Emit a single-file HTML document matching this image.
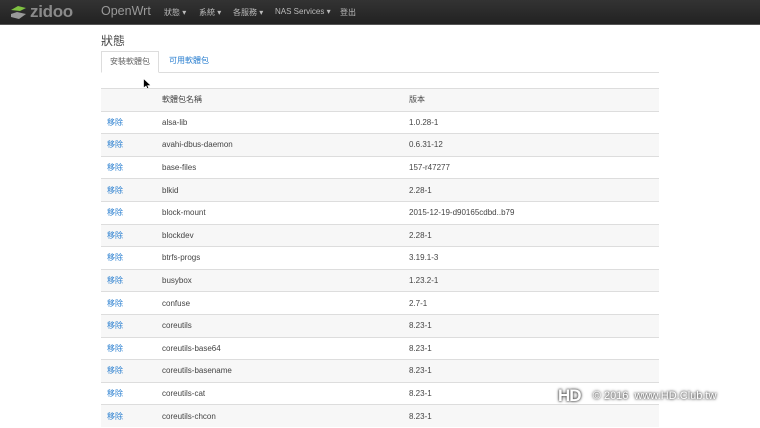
<!DOCTYPE html>
<html><head><meta charset="utf-8"><style>
*{margin:0;padding:0;box-sizing:border-box}
body{width:760px;height:428px;overflow:hidden;background:#fff;font-family:"Liberation Sans","Noto Sans CJK TC",sans-serif;color:#333;position:relative}
.nav{position:absolute;left:0;top:0;width:760px;height:25px;background:linear-gradient(#333,#222);border-bottom:1px solid #555}
.nav span{position:absolute;top:7px;font-size:8px;color:#bbb;white-space:nowrap}
.logo{position:absolute;left:30px;top:2px;font-size:17px;font-weight:bold;color:#8a8a8a;letter-spacing:-0.3px}
.ow{position:absolute;left:101px;top:4px;font-size:12.5px;color:#999}
.title{position:absolute;left:101px;top:32px;font-size:12px;color:#444}
.tabs{position:absolute;left:101px;top:72px;width:558px;border-top:1px solid #ddd}
.tab1{position:absolute;left:101px;top:51px;width:58px;height:22px;border:1px solid #ddd;border-bottom:1px solid #fff;background:#fff;font-size:8px;color:#666;text-align:center;line-height:20px}
.tab2{position:absolute;left:169px;top:51px;font-size:8px;color:#2a7fd0;line-height:20px}
table{position:absolute;left:101px;top:88px;width:558px;border-collapse:collapse;font-size:8px}
td{height:22.6px;border-top:1px solid #ddd;padding:0;vertical-align:middle;color:#444}
tr:nth-child(odd) td{background:#f7f7f7}
td.a{width:61px;padding-left:6px;color:#2a7fd0}
td.b{width:247px}
.wm{position:absolute;left:558px;top:386px;font-size:11px;color:#fff;text-shadow:0 0 3px #555,0 0 2px #333;white-space:nowrap}
</style></head><body>
<div class="nav">
<svg style="position:absolute;left:9px;top:5px" width="19" height="15" viewBox="0 0 19 15"><path d="M2 5 L9 1 L17 3 L11 6 Z" fill="#7fc241"/><path d="M2 9 L8 7 L17 9 L10 14 L2 12 Z" fill="#999"/></svg>
<div class="logo">zidoo</div>
<div class="ow">OpenWrt</div>
<span style="left:164px">狀態 ▾</span>
<span style="left:199px">系統 ▾</span>
<span style="left:233px">各服務 ▾</span>
<span style="left:275px">NAS Services ▾</span>
<span style="left:340px">登出</span>
</div>
<div class="title">狀態</div>
<div class="tabs"></div>
<div class="tab1">安裝軟體包</div>
<div class="tab2">可用軟體包</div>
<svg style="position:absolute;left:143px;top:78px" width="9" height="13" viewBox="0 0 9 13"><path d="M0.5 0.5 L0.5 10 L3 8 L5 12.5 L6.5 12 L4.7 7.6 L8 7.5 Z" fill="#000" stroke="#fff" stroke-width="0.7"/></svg>
<table>
<tr><td class="a" style="color:#444"></td><td class="b">軟體包名稱</td><td>版本</td></tr>
<tr><td class="a">移除</td><td class="b">alsa-lib</td><td>1.0.28-1</td></tr>
<tr><td class="a">移除</td><td class="b">avahi-dbus-daemon</td><td>0.6.31-12</td></tr>
<tr><td class="a">移除</td><td class="b">base-files</td><td>157-r47277</td></tr>
<tr><td class="a">移除</td><td class="b">blkid</td><td>2.28-1</td></tr>
<tr><td class="a">移除</td><td class="b">block-mount</td><td>2015-12-19-d90165cdbd..b79</td></tr>
<tr><td class="a">移除</td><td class="b">blockdev</td><td>2.28-1</td></tr>
<tr><td class="a">移除</td><td class="b">btrfs-progs</td><td>3.19.1-3</td></tr>
<tr><td class="a">移除</td><td class="b">busybox</td><td>1.23.2-1</td></tr>
<tr><td class="a">移除</td><td class="b">confuse</td><td>2.7-1</td></tr>
<tr><td class="a">移除</td><td class="b">coreutils</td><td>8.23-1</td></tr>
<tr><td class="a">移除</td><td class="b">coreutils-base64</td><td>8.23-1</td></tr>
<tr><td class="a">移除</td><td class="b">coreutils-basename</td><td>8.23-1</td></tr>
<tr><td class="a">移除</td><td class="b">coreutils-cat</td><td>8.23-1</td></tr>
<tr><td class="a">移除</td><td class="b">coreutils-chcon</td><td>8.23-1</td></tr>
</table>
<div class="wm"><span style="font-size:17px;font-weight:bold;letter-spacing:-1px;vertical-align:-2px">HD</span>&nbsp;&nbsp;&nbsp;&nbsp;© 2016&nbsp; www.HD.Club.tw</div>
</body></html>
